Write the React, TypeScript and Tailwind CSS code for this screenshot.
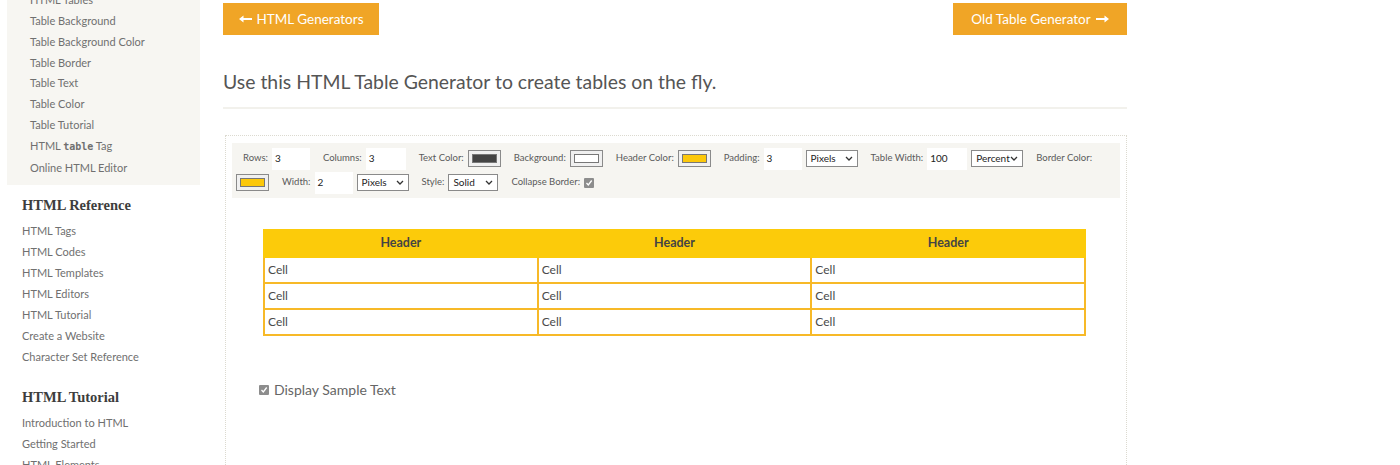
import React from "react";

const sans = { fontFamily: "Lato, 'Open Sans', sans-serif" };
const serif = { fontFamily: "'Liberation Serif', serif" };

const topicLinks = [
	"HTML Tables",
	"Table Background",
	"Table Background Color",
	"Table Border",
	"Table Text",
	"Table Color",
	"Table Tutorial",
	"TAG",
	"Online HTML Editor",
];

const referenceLinks = [
	"HTML Tags",
	"HTML Codes",
	"HTML Templates",
	"HTML Editors",
	"HTML Tutorial",
	"Create a Website",
	"Character Set Reference",
];

const tutorialLinks = ["Introduction to HTML", "Getting Started", "HTML Elements"];

function Arrow({ dir }: { dir: "left" | "right" }) {
	return (
		<svg width="13" height="8" viewBox="0 0 13 8" className={dir === "right" ? "rotate-180" : ""}>
			<path d="M0 4 L4.5 0.5 L4.5 3 L13 3 L13 5 L4.5 5 L4.5 7.5 Z" fill="white" />
		</svg>
	);
}

function Check() {
	return (
		<span className="inline-flex h-[10px] w-[10px] items-center justify-center rounded-[1px] bg-[#8d8d8d]">
			<svg width="8" height="8" viewBox="0 0 8 8">
				<path d="M1.5 4 L3.3 6 L6.7 1.5" stroke="white" strokeWidth="1.3" fill="none" />
			</svg>
		</span>
	);
}

function Swatch({ color }: { color: string }) {
	return (
		<span className="inline-flex h-[17px] w-[33px] items-center justify-center border border-[#8a8a8a] bg-[#f0f0f0] px-[3px]">
			<span className="block h-[9px] w-full border border-[#777]" style={{ background: color }} />
		</span>
	);
}

function Field({ value, w = "w-[38px]" }: { value: string; w?: string }) {
	return <span className={`inline-flex h-[22px] ${w} items-center bg-white pl-[3px] text-[10px] text-[#222]`}>{value}</span>;
}

function Select({ value, w }: { value: string; w: string }) {
	return (
		<span className={`inline-flex h-[17px] ${w} items-center justify-between border border-[#8a8a8a] bg-white px-[4px] text-[10px] text-[#222]`}>
			{value}
			<svg width="8" height="5" viewBox="0 0 8 5">
				<path d="M1 1 L4 4 L7 1" stroke="#333" strokeWidth="1.3" fill="none" />
			</svg>
		</span>
	);
}

function Opt({ label, children }: { label: string; children?: React.ReactNode }) {
	return (
		<span className="inline-flex items-center gap-[4px]">
			<span>{label}</span>
			{children}
		</span>
	);
}

export default function App() {
	return (
		<div className="flex h-[465px] w-[1400px] overflow-hidden bg-white text-[#555]" style={sans}>
			{/* sidebar */}
			<aside className="w-[200px] shrink-0">
				<div className="ml-[7px] mt-[-10px] flex flex-col bg-[#f7f6f2] pb-[6px] pl-[23px] text-[11px] leading-[20.86px] text-[#707070]">
					{topicLinks.map((l) =>
						l === "TAG" ? (
							<span key={l}>
								HTML <code className="text-[10px] font-bold" style={{ fontFamily: "'DejaVu Sans Mono', monospace" }}>table</code> Tag
							</span>
						) : (
							<span key={l}>{l}</span>
						)
					)}
				</div>
				<div className="pl-[22px]">
					<h3 className="mt-[8px] text-[14.5px] font-semibold leading-[24px] text-[#3d3d3d]" style={serif}>
						HTML Reference
					</h3>
					<ul className="mt-[3px] text-[11px] leading-[21px] text-[#707070]">
						{referenceLinks.map((l) => (
							<li key={l}>{l}</li>
						))}
					</ul>
					<h3 className="mt-[18px] text-[14.5px] font-semibold leading-[24px] text-[#3d3d3d]" style={serif}>
						HTML Tutorial
					</h3>
					<ul className="mt-[3px] text-[11px] leading-[21px] text-[#707070]">
						{tutorialLinks.map((l) => (
							<li key={l}>{l}</li>
						))}
					</ul>
				</div>
			</aside>

			{/* main */}
			<main className="ml-[23px] w-[904px] shrink-0">
				<div className="mt-[3px] flex justify-between">
					<button className="flex h-[32px] w-[156px] items-center justify-center gap-[5px] bg-[#f0a526] text-[13.5px] text-white">
						<Arrow dir="left" />
						HTML Generators
					</button>
					<button className="flex h-[32px] w-[174px] items-center justify-center gap-[5px] bg-[#f0a526] text-[13.5px] text-white">
						Old Table Generator
						<Arrow dir="right" />
					</button>
				</div>

				<h2 className="mt-[34px] border-b-2 border-[#f2f1ec] pb-[12px] text-[19.4px] leading-[26px] text-[#555]">
					Use this HTML Table Generator to create tables on the fly.
				</h2>

				<section className="ml-[2px] mt-[26px] h-[400px] border border-dotted border-[#dcdad0] px-[6px] pt-[7px]">
					<div className="flex h-[55px] flex-col justify-center gap-[2px] bg-[#f6f5f1] text-[9.5px] text-[#5a5a5a]">
						<div className="flex items-center gap-[13px] pl-[11px]">
							<Opt label="Rows:">
								<Field value="3" />
							</Opt>
							<Opt label="Columns:">
								<Field value="3" w="w-[40px]" />
							</Opt>
							<Opt label="Text Color:">
								<Swatch color="#444444" />
							</Opt>
							<Opt label="Background:">
								<Swatch color="#ffffff" />
							</Opt>
							<Opt label="Header Color:">
								<Swatch color="#fcc80b" />
							</Opt>
							<Opt label="Padding:">
								<Field value="3" />
								<Select value="Pixels" w="w-[52px]" />
							</Opt>
							<Opt label="Table Width:">
								<Field value="100" w="w-[40px]" />
								<Select value="Percent" w="w-[52px]" />
							</Opt>
							<Opt label="Border Color:" />
						</div>
						<div className="flex items-center gap-[13px] pl-[4px]">
							<Swatch color="#fcc80b" />
							<Opt label="Width:">
								<Field value="2" />
								<Select value="Pixels" w="w-[52px]" />
							</Opt>
							<Opt label="Style:">
								<Select value="Solid" w="w-[50px]" />
							</Opt>
							<Opt label="Collapse Border:">
								<Check />
							</Opt>
						</div>
					</div>

					<table className="ml-[31px] mt-[31px] w-[823px] table-fixed border-collapse text-[12px]">
						<thead>
							<tr className="h-[27px] bg-[#fccb0a]">
								{[0, 1, 2].map((i) => (
									<th key={i} className="border-2 border-[#fccb0a] text-[12.5px] font-bold text-[#444]">
										Header
									</th>
								))}
							</tr>
						</thead>
						<tbody>
							{[0, 1, 2].map((r) => (
								<tr key={r} className="h-[26px]">
									{[0, 1, 2].map((c) => (
										<td key={c} className="border-2 border-[#f7b928] pl-[3px] text-left text-[#4a4a4a]">
											Cell
										</td>
									))}
								</tr>
							))}
						</tbody>
					</table>

					<label className="ml-[27px] mt-[43px] flex items-center gap-[5px] text-[14px] text-[#666]">
						<Check />
						Display Sample Text
					</label>
				</section>
			</main>
		</div>
	);
}
